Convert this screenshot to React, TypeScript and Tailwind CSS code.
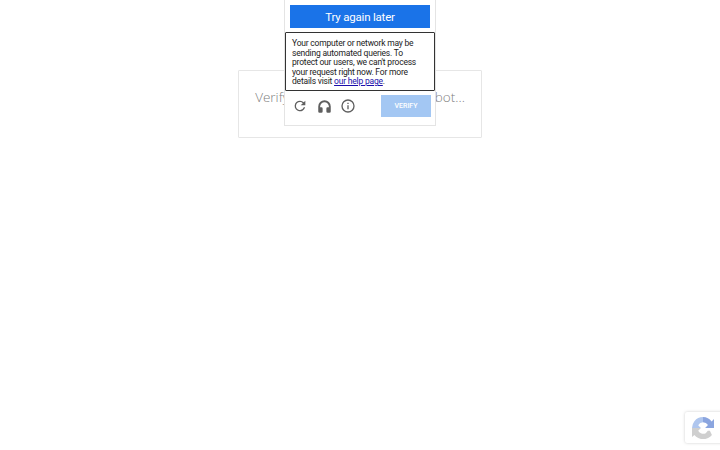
export default function App() {
  return (
    <div className="relative h-[450px] w-[720px] overflow-hidden bg-white font-['Roboto',sans-serif]">
      <div className="pt-[70px]">
        <div className="mx-auto flex h-[68px] w-[244px] justify-center rounded-[1px] border border-[#e6e6e6] pt-[17px]">
          <span className="font-['Open_Sans',sans-serif] text-[13.5px] leading-[18px] font-light whitespace-nowrap text-[#808080]">
            Verifying that you are not a robot...
          </span>
        </div>
      </div>

      <div className="absolute top-[-1px] left-[284px] flex h-[127px] w-[152px] flex-col justify-between border border-[#e4e4e4] bg-white pt-[5px] pr-[5px] pb-[8px] pl-[5px]">
        <div className="flex h-[23px] w-[140px] items-center justify-center bg-[#1a73e8] pt-[2px] text-[11.5px] tracking-[-0.2px] text-white">
          Try again later
        </div>
        <div className="ml-[-2px] flex w-[143px] items-center">
          <div className="flex h-[22px] w-[24px] items-center justify-center text-[#5f5f5f]">
            <svg width="16" height="16" viewBox="0 0 24 24" fill="currentColor">
              <path d="M17.65 6.35A7.96 7.96 0 0 0 12 4a8 8 0 1 0 7.73 10h-2.08A6 6 0 1 1 12 6c1.66 0 3.14.69 4.22 1.78L13 11h7V4l-2.35 2.35z" />
            </svg>
          </div>
          <div className="flex h-[22px] w-[24px] items-center justify-center text-[#5f5f5f]">
            <svg width="15" height="15" viewBox="0 0 24 24" fill="currentColor">
              <path d="M12 2a10 10 0 0 0-10 10v8a2 2 0 0 0 2 2h3a2 2 0 0 0 2-2v-5a2 2 0 0 0-2-2H5v-1a7 7 0 0 1 14 0v1h-2a2 2 0 0 0-2 2v5a2 2 0 0 0 2 2h3a2 2 0 0 0 2-2v-8A10 10 0 0 0 12 2z" />
            </svg>
          </div>
          <div className="flex h-[22px] w-[24px] items-center justify-center text-[#5f5f5f]">
            <svg width="16" height="16" viewBox="0 0 24 24" fill="currentColor">
              <path d="M11 7h2v2h-2zm0 4h2v6h-2zm1-9a10 10 0 1 0 0 20 10 10 0 0 0 0-20zm0 18a8 8 0 1 1 0-16 8 8 0 0 1 0 16z" />
            </svg>
          </div>
          <div className="ml-auto flex h-[22px] w-[50px] items-center justify-center bg-[#a3c7f3] text-[7px] font-medium text-white">
            VERIFY
          </div>
        </div>
      </div>

      <div className="absolute top-[32px] left-[285px] h-[59px] w-[150px] rounded-[1px] border border-[#333] bg-white pt-[6px] pl-[6px] text-[8.5px] leading-[9.5px] tracking-[-0.2px] text-[#222]">
        Your computer or network may be
        <br />
        sending automated queries. To
        <br />
        protect our users, we can't process
        <br />
        your request right now. For more
        <br />
        details visit <span className="text-[#1a0dab] underline">our help page</span>.
      </div>

      <div className="absolute top-[412px] left-[685px] flex h-[31px] w-[40px] items-center rounded-[2px] pl-[7px] shadow-[0_0_3px_rgba(128,128,128,0.4)]">
        <svg width="22" height="22" viewBox="0 0 64 64" opacity=".8">
          <path d="M32 0A32 32 0 0 0 7 12L18 24A17 17 0 0 1 32 15Z M7 12A32 32 0 0 0 0 32H26L18 24Z" fill="#9cb8ea" />
          <path d="M32 0A32 32 0 0 1 57 12.8L64 6V32H38L46.5 23.5A17 17 0 0 0 32 15Z" fill="#6f8fd8" />
          <path d="M0 32H26L18 40A17 17 0 0 0 40 47L46 40H34V40H52L58 52A32 32 0 0 1 7 52L0 58Z" fill="#c4c4c4" />
        </svg>
      </div>
    </div>
  );
}
